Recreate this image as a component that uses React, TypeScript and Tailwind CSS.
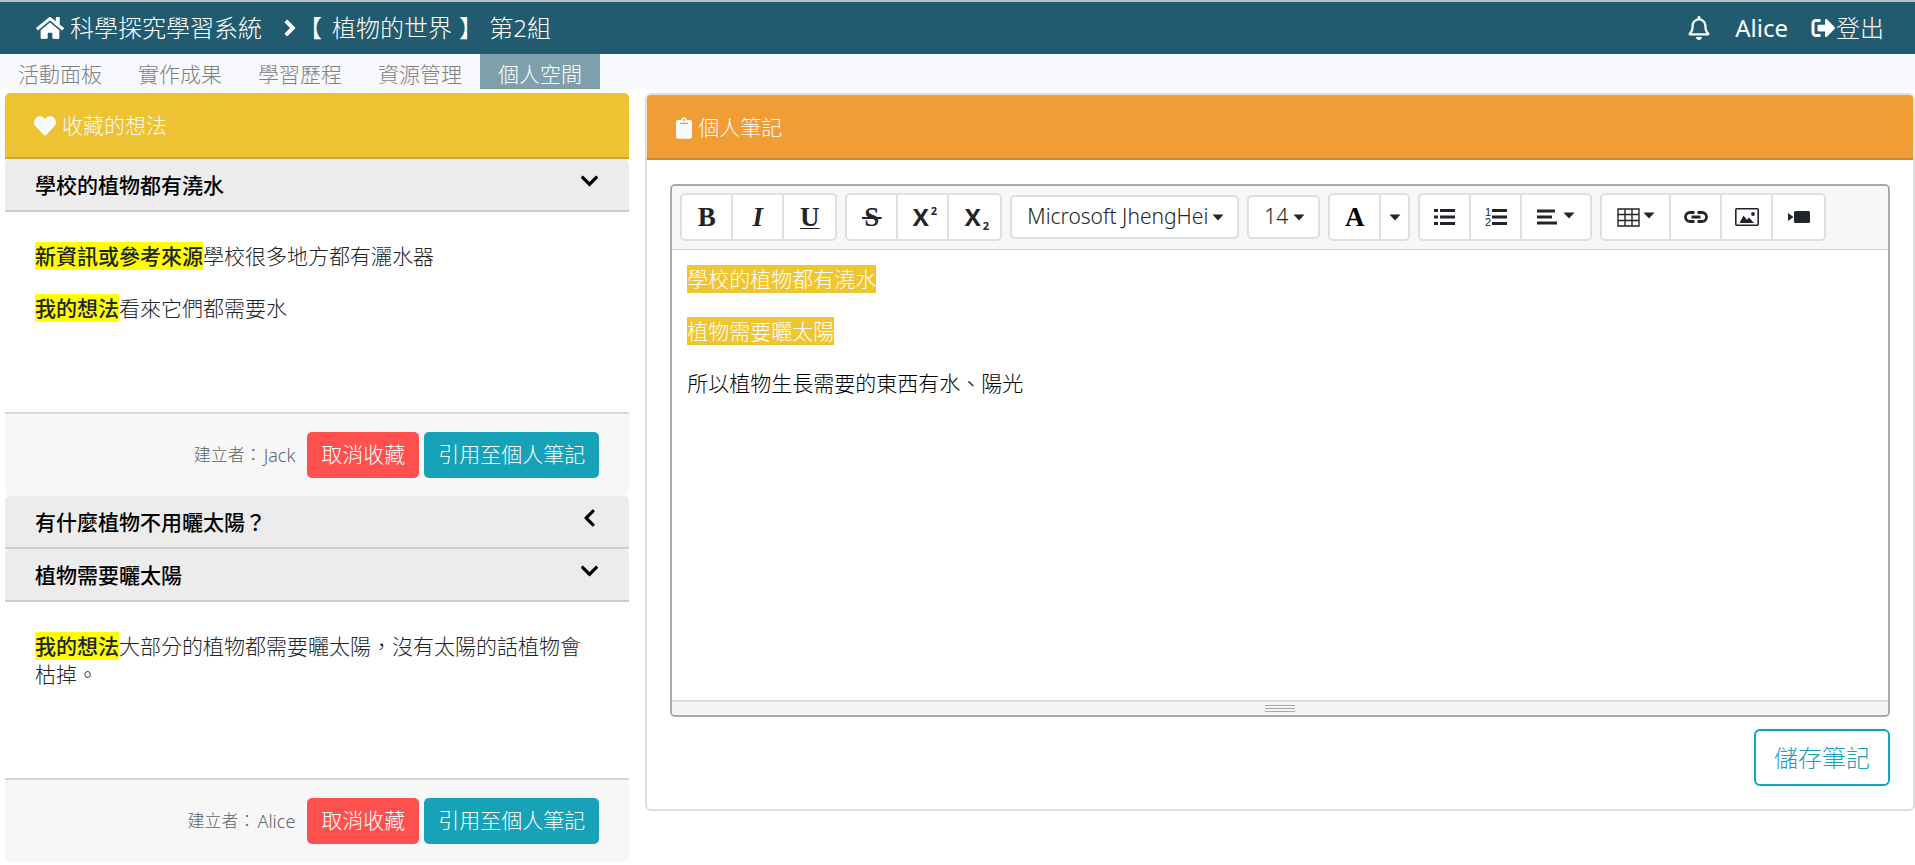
import type { ReactNode } from "react";
import {
  FaAngleRight,
  FaChevronDown,
  FaChevronLeft,
  FaClipboard,
  FaHeart,
  FaHome,
  FaRegBell,
  FaSignOutAlt,
} from "react-icons/fa";

const tabs = ["活動面板", "實作成果", "學習歷程", "資源管理", "個人空間"];
const activeTab = "個人空間";

function Mark({ children }: { children: ReactNode }) {
  return <strong className="inline-block bg-[#ffff00] font-medium leading-7">{children}</strong>;
}

function IdeaHeader({ title, open }: { title: string; open: boolean }) {
  return (
    <h2>
      <button
        type="button"
        aria-expanded={open}
        className="flex w-full items-start justify-between rounded-t-[5px] border-b-2 border-[#cdcdcd] bg-[#ececec] px-[30px] pt-3 pb-[11px] text-left leading-7 font-medium text-black"
      >
        <span>{title}</span>
        {open ? <FaChevronDown className="h-5 w-[19px]" /> : <FaChevronLeft className="h-5 w-[19px]" />}
      </button>
    </h2>
  );
}

function Idea({ title, author, children }: { title: string; author: string; children: ReactNode }) {
  return (
    <article>
      <IdeaHeader title={title} open />
      <div className="px-[30px] pt-[30px] pb-[66px] leading-7">{children}</div>
      <footer className="flex items-center justify-end rounded-b-[5px] border-t-2 border-[#d8d8d8] bg-[#f7f7f7] px-[30px] py-[18px]">
        <span className="mr-3 flex items-center gap-0.5 text-[17px] text-[#5d656d]">
          <span>建立者：</span>
          <span className="font-['Noto_Sans',sans-serif] text-lg leading-6">{author}</span>
        </span>
        <button type="button" className="mr-[5px] h-[46px] rounded-[5px] bg-[#ff5050] px-3.5 text-white">
          取消收藏
        </button>
        <button type="button" className="h-[46px] rounded-[5px] bg-[#17a2b8] px-3.5 text-white">
          引用至個人筆記
        </button>
      </footer>
    </article>
  );
}

function Caret() {
  return (
    <svg viewBox="0 0 12 7" className="h-[7px] w-3 shrink-0 fill-current" aria-hidden="true">
      <path d="M0.5 0.5h11L6 6.5z" />
    </svg>
  );
}

function ToolGroup({ children }: { children: ReactNode }) {
  return (
    <div
      role="group"
      className="flex h-12 divide-x-2 divide-[#dae0e5] rounded-[5px] border-2 border-[#dae0e5] bg-white"
    >
      {children}
    </div>
  );
}

function Tool({ label, width = "w-[51px]", children }: { label: string; width?: string; children: ReactNode }) {
  return (
    <button type="button" aria-label={label} title={label} className={`flex items-center justify-center ${width}`}>
      {children}
    </button>
  );
}

function ToolSelect({ label, value, width }: { label: string; value: string; width: string }) {
  return (
    <div className={`relative flex h-11 items-center ${width}`}>
      <select
        aria-label={label}
        className="h-full w-full appearance-none rounded-[5px] border-2 border-[#dae0e5] bg-white pl-[15px] font-['Noto_Sans',sans-serif] text-[21px] font-light"
      >
        <option>{value}</option>
      </select>
      <span className="pointer-events-none absolute right-[15px]">
        <Caret />
      </span>
    </div>
  );
}

const serifGlyph = "font-['Liberation_Serif',serif] text-[27px] leading-7 font-bold";

function Toolbar() {
  return (
    <div className="flex flex-wrap items-center gap-2 border-b border-[#d0d0d0] bg-[#f7f7f7] px-2 pt-[7px] pb-2">
      <ToolGroup>
        <Tool label="粗體">
          <span className={serifGlyph}>B</span>
        </Tool>
        <Tool label="斜體">
          <span className={`${serifGlyph} italic`}>I</span>
        </Tool>
        <Tool label="底線">
          <span className={`${serifGlyph} underline decoration-1 underline-offset-2`}>U</span>
        </Tool>
      </ToolGroup>
      <ToolGroup>
        <Tool label="刪除線">
          <span className={`${serifGlyph} whitespace-pre line-through decoration-2`}>{"\u200AS\u200A"}</span>
        </Tool>
        <Tool label="上標">
          <span className="flex items-start gap-0.5 pl-1 text-2xl leading-7 font-bold">
            X<span className="text-[11px] leading-4">2</span>
          </span>
        </Tool>
        <Tool label="下標">
          <span className="flex items-end gap-0.5 pl-1 text-2xl leading-7 font-bold">
            X<span className="text-[11px] leading-[11px]">2</span>
          </span>
        </Tool>
      </ToolGroup>
      <ToolSelect label="字型" value="Microsoft JhengHei" width="w-[229px]" />
      <ToolSelect label="字型大小" value="14" width="w-[73px]" />
      <ToolGroup>
        <Tool label="文字顏色">
          <span className={`${serifGlyph} text-black`}>A</span>
        </Tool>
        <Tool label="更多顏色" width="w-[27px]">
          <Caret />
        </Tool>
      </ToolGroup>
      <ToolGroup>
        <Tool label="項目符號清單">
          <svg viewBox="0 0 21 18" className="h-[18px] w-[21px] fill-current">
            <path d="M0 1h4v3H0zM0 7.500h4v3H0zM0 14h4v3H0zM6 1h15v3H6zM6 7.500h15v3H6zM6 14h15v3H6z" />
          </svg>
        </Tool>
        <Tool label="編號清單">
          <svg viewBox="0 0 22 20" className="h-5 w-[22px] fill-current">
            <text x="0" y="8.500" fontSize="11" fontFamily="Liberation Sans" fontWeight="400">1</text>
            <text x="0" y="19" fontSize="11" fontFamily="Liberation Sans" fontWeight="400">2</text>
            <path d="M7 2h15v3H7zM7 8.500h15v3H7zM7 15h15v3H7z" />
          </svg>
        </Tool>
        <Tool label="段落" width="w-[68px]">
          <span className="flex items-center gap-1.5">
            <svg viewBox="0 0 20 16" className="h-4 w-5 fill-current">
              <path d="M0 0.500h18v3H0zM0 6.500h15v3H0zM0 12.500h20v3H0z" />
            </svg>
            <span className="pb-1">
              <Caret />
            </span>
          </span>
        </Tool>
      </ToolGroup>
      <ToolGroup>
        <Tool label="表格" width="w-[69px]">
          <span className="flex items-center gap-[3px]">
            <svg viewBox="0 0 23 19" className="h-[19px] w-[23px] fill-none stroke-current">
              <path d="M1 1h21v17H1zM8 1v17M15 1v17M1 6.500h21M1 12.500h21" strokeWidth="1.4" />
            </svg>
            <span className="pb-1">
              <Caret />
            </span>
          </span>
        </Tool>
        <Tool label="連結">
          <svg viewBox="0 0 24 12" className="h-3 w-6 fill-none stroke-current">
            <path d="M10.500 1.500H6a4.500 4.500 0 0 0 0 9h4.500M13.500 1.500H18a4.500 4.500 0 0 1 0 9h-4.500M7.500 6h9" strokeWidth="2.8" />
          </svg>
        </Tool>
        <Tool label="圖片">
          <svg viewBox="0 0 24 18" className="h-[18px] w-6 fill-current">
            <rect x="0.8" y="0.8" width="22.4" height="16.4" rx="1" fill="none" stroke="currentColor" strokeWidth="1.6" />
            <path d="M4.500 15l4-7.500 3.500 4.200 2-2.200L19 15z" />
            <circle cx="18" cy="6" r="1.900" />
          </svg>
        </Tool>
        <Tool label="影片">
          <svg viewBox="0 0 22 12" className="h-3 w-[22px] fill-current">
            <path d="M0 2l5.500 4L0 10z" />
            <rect x="6" y="0" width="16" height="12" rx="1.500" />
          </svg>
        </Tool>
      </ToolGroup>
    </div>
  );
}

function Quote({ children }: { children: ReactNode }) {
  return <span className="inline-block bg-[#efc530] leading-7 text-white">{children}</span>;
}

export default function App() {
  return (
    <div className="bg-white font-['Open_Sans','Noto_Sans_CJK_TC',sans-serif] text-[21px] font-light text-[#212529]">
      <header className="flex h-[54px] items-center border-t-2 border-[#b9bdbf] bg-[#225b6f] pr-[31px] pl-9 text-2xl text-white">
        <a href="#home" className="flex items-center gap-1.5">
          <FaHome className="size-7" />
          科學探究學習系統
        </a>
        <FaAngleRight className="ml-5 h-[26px] w-4" />
        <span>
          【<span className="mr-[7px] ml-2.5">植物的世界</span>】 第
          <span className="font-['Noto_Sans',sans-serif]">2</span>組
        </span>
        <div className="ml-auto flex items-center">
          <button type="button" aria-label="通知">
            <FaRegBell className="size-6" />
          </button>
          <a href="#profile" className="ml-6 font-['Noto_Sans',sans-serif] font-normal">
            Alice
          </a>
          <a href="#logout" className="ml-[23px] flex items-center">
            <FaSignOutAlt className="h-6 w-[25px]" />
            登出
          </a>
        </div>
      </header>

      <nav className="flex bg-[#f8f9fc] text-[#808080]">
        {tabs.map((tab) => (
          <a
            key={tab}
            href="#tab"
            aria-current={tab === activeTab ? "page" : undefined}
            className={`px-[18px] pt-1.5 pb-px leading-7 ${tab === activeTab ? "bg-[#7f9fab] text-white" : ""}`}
          >
            {tab}
          </a>
        ))}
      </nav>

      <main className="flex items-start pt-1">
        <section className="w-1/3 pr-[9px] pl-[5px]">
          <h1 className="flex h-[66px] items-center gap-1.5 rounded-t-[5px] border-b-2 border-[#cfa72e] bg-[#edc233] px-[29px] pt-0.5 text-[#f8f9fa]">
            <FaHeart className="size-[22px]" />
            收藏的想法
          </h1>
          <Idea title="學校的植物都有澆水" author="Jack">
            <p className="mb-6">
              <Mark>新資訊或參考來源</Mark>學校很多地方都有灑水器
            </p>
            <p className="pb-6">
              <Mark>我的想法</Mark>看來它們都需要水
            </p>
          </Idea>
          <IdeaHeader title="有什麼植物不用曬太陽？" open={false} />
          <Idea title="植物需要曬太陽" author="Alice">
            <p className="pb-6">
              <Mark>我的想法</Mark>大部分的植物都需要曬太陽，沒有太陽的話植物會枯掉。
            </p>
          </Idea>
        </section>

        <section className="w-2/3 pl-[7px]">
          <div className="rounded-[6px] border-2 border-[#dfdfdf]">
            <h1 className="flex h-[65px] items-center gap-1.5 rounded-t-[4px] border-b-2 border-[#cc882f] bg-[#ef9d34] px-[29px] pt-0.5 text-[#f8f9fa]">
              <FaClipboard className="h-[22px] w-4" />
              個人筆記
            </h1>
            <div className="flex flex-col px-[23px] pt-6 pb-[23px]">
              <div className="overflow-hidden rounded-[5px] border-2 border-[#a9a9a9]">
                <Toolbar />
                <div
                  role="textbox"
                  aria-multiline="true"
                  aria-label="個人筆記"
                  contentEditable
                  suppressContentEditableWarning
                  className="min-h-[450px] px-[15px] pt-[15px] leading-7 text-black outline-none"
                >
                  <p className="mb-6">
                    <Quote>學校的植物都有澆水</Quote>
                  </p>
                  <p className="mb-6">
                    <Quote>植物需要曬太陽</Quote>
                  </p>
                  <p>所以植物生長需要的東西有水、陽光</p>
                </div>
                <div className="flex h-[15px] flex-col items-center justify-center gap-0.5 border-t-2 border-[#dddddd] bg-[#f5f5f5]">
                  <span className="h-px w-[30px] bg-[#a9a9a9]" />
                  <span className="h-px w-[30px] bg-[#a9a9a9]" />
                  <span className="h-px w-[30px] bg-[#a9a9a9]" />
                </div>
              </div>
              <button
                type="button"
                className="mt-3 h-[57px] self-end rounded-[6px] border-2 border-[#17a2b8] bg-white px-[18px] text-2xl text-[#17a2b8]"
              >
                儲存筆記
              </button>
            </div>
          </div>
        </section>
      </main>
    </div>
  );
}
